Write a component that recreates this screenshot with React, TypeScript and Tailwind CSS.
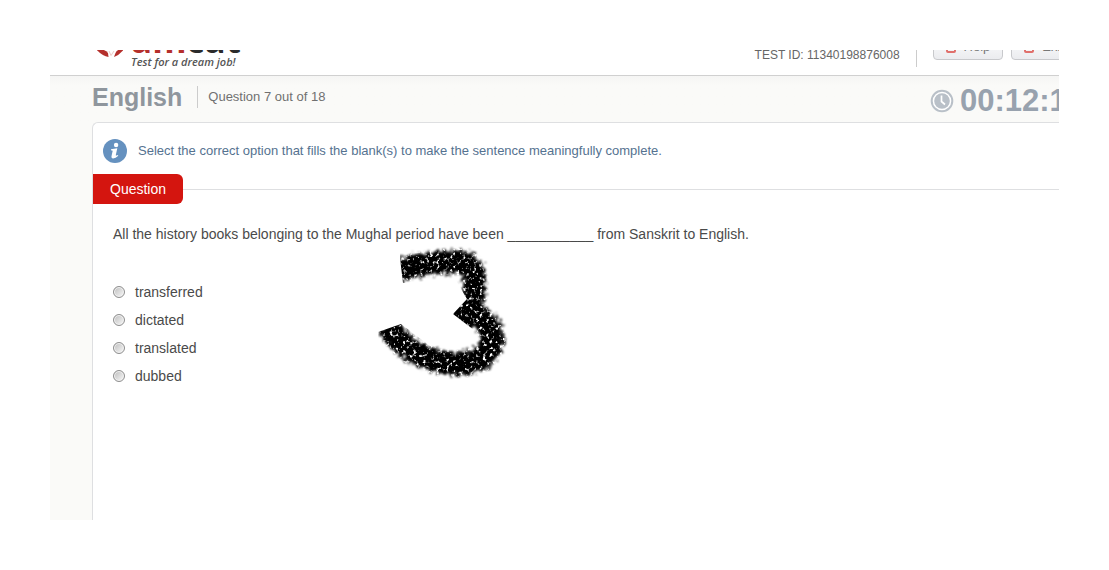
import React from "react";

const options = ["transferred", "dictated", "translated", "dubbed"];

function Logo() {
  return (
    <div className="flex items-end gap-2">
      <svg className="mb-3 h-6 w-[26px]" viewBox="0 0 26 24" aria-hidden="true">
        <path d="M-2 14Q8 15 11 19L11.5 23Q5 22 -2 14Z" fill="#b5302c" />
        <path d="M28 14Q20 15 18.5 19L17 23Q23 21 28 14Z" fill="#b5302c" />
        <path d="M12 17L14 21.5L17 17" fill="none" stroke="#eecac7" strokeWidth="1" />
      </svg>
      <div className="flex flex-col font-['Open_Sans',sans-serif]">
        <span className="h-7 text-[35px] leading-7 font-bold text-[#b5302c]">
          am<span className="text-[#2b2b2b]">cat</span>
        </span>
        <span className="text-[11px] leading-4 font-semibold text-[#555] italic">
          Test for a dream job!
        </span>
      </div>
    </div>
  );
}

function HeaderButton({ label }: { label: string }) {
  return (
    <button
      type="button"
      className="flex h-[27px] shrink-0 items-center gap-2 rounded border border-[#c8c9cc] bg-gradient-to-b from-white to-[#ebecef] px-3 text-[13px] leading-4 text-[#777]"
    >
      <span className="h-3 w-2.5 rounded-xs border-2 border-[#e0706c]" />
      {label}
    </button>
  );
}

function ClockIcon() {
  return (
    <svg className="size-6" viewBox="0 0 24 24" aria-hidden="true">
      <circle cx="12" cy="12" r="10.3" fill="#fff" stroke="#b9c0c8" strokeWidth="2" />
      <circle cx="12" cy="12" r="7.8" fill="#b9c0c8" />
      <path d="M11.5 6.5V12.5L15 15.5" fill="none" stroke="#fff" strokeWidth="1.7" />
    </svg>
  );
}

function InfoIcon() {
  return (
    <svg className="size-6 shrink-0" viewBox="0 0 24 24" aria-hidden="true">
      <circle cx="12" cy="12" r="12" fill="#6591bf" />
      <circle cx="13.1" cy="6" r="2.2" fill="#fff" />
      <path
        d="M8 10.2Q11 9.7 14.3 9.2L12.8 16Q12.7 17.2 14.8 15.9L15.3 16.8Q12.6 19.4 10.1 19.4Q8 19.2 8.6 16.7L9.7 11.7L8 11.3Z"
        fill="#fff"
      />
    </svg>
  );
}

const upperStroke = "M395 271Q426 260 459 261Q475 262 474 281Q477 300 458 324";
const lowerStroke = "M462 315Q483 311 490 328Q497 345 480 358Q460 367 433 359Q404 351 387 323";

function BrushThree() {
  return (
    <svg
      className="pointer-events-none absolute top-[118px] left-[277px] h-[150px] w-[150px]"
      viewBox="370 240 150 150"
      aria-hidden="true"
    >
      <defs>
        <filter id="brush" filterUnits="userSpaceOnUse" x="370" y="240" width="150" height="150" colorInterpolationFilters="sRGB">
          <feTurbulence type="fractalNoise" baseFrequency="0.3" numOctaves="2" seed="4" result="n" />
          <feDisplacementMap in="SourceGraphic" in2="n" scale="14" xChannelSelector="R" yChannelSelector="G" result="d" />
          <feGaussianBlur in="d" stdDeviation="1.2" />
        </filter>
        <filter id="grain" filterUnits="userSpaceOnUse" x="370" y="240" width="150" height="150" colorInterpolationFilters="sRGB">
          <feTurbulence type="fractalNoise" baseFrequency="0.3" numOctaves="2" seed="9" />
          <feColorMatrix values="0 0 0 0 1  0 0 0 0 1  0 0 0 0 1  5 0 0 0 -2.8" result="g" />
          <feComposite in="g" in2="SourceAlpha" operator="in" result="c" />
          <feGaussianBlur in="c" stdDeviation="0.6" />
        </filter>
        <clipPath id="ends">
          <path d="M400 257L403 282L455 278L467 298L453 313L474 329L465 342L430 345L401 323L378 331V390H520V240H400Z" />
        </clipPath>
      </defs>
      <g clipPath="url(#ends)" fill="none" strokeLinejoin="round">
        <g filter="url(#brush)" stroke="#000">
          <path d={upperStroke} strokeWidth="23" />
          <path d={lowerStroke} strokeWidth="23" />
        </g>
        <g filter="url(#grain)" stroke="#fff">
          <path d={upperStroke} strokeWidth="28" />
          <path d={lowerStroke} strokeWidth="28" />
        </g>
      </g>
    </svg>
  );
}

export default function App() {
  return (
    <div className="min-h-screen bg-white p-[50px] font-['Liberation_Sans',Arial,sans-serif] text-[#4a4a4a]">
      <div className="overflow-hidden bg-[#fafaf8]">
        <header className="flex h-[26px] items-end justify-between overflow-hidden border-b border-[#d0d0d0] bg-white pl-[47px]">
          <div className="pb-[5px]">
            <Logo />
          </div>
          <div className="-mr-[17px] flex items-end">
            <span className="pb-3 text-[12px] leading-4 text-[#666]">TEST ID: 11340198876008</span>
            <span className="mr-4 mb-2 ml-4 h-10 w-px bg-[#ccc]" />
            <div className="-mr-px flex gap-2 pb-[15px]">
              <HeaderButton label="Help" />
              <HeaderButton label="Exit" />
            </div>
          </div>
        </header>

        <div className="flex h-[46px] items-center justify-between bg-gradient-to-b from-[#f5f5f4] to-[#fafaf8] to-20% pl-[42px]">
          <div className="flex items-center pb-1">
            <h1 className="text-[25px] leading-8 font-bold text-[#8f969d]">English</h1>
            <span className="mr-2.5 ml-[15px] h-[22px] w-px bg-[#ccc]" />
            <span className="text-[13px] text-[#707070]">Question 7 out of 18</span>
          </div>
          <div className="-mr-[25px] flex items-center gap-1.5 pt-1 whitespace-nowrap">
            <ClockIcon />
            <span className="text-[31px] leading-8 font-bold text-[#98a2ae]">00:12:10</span>
          </div>
        </div>

        <main className="relative ml-[42px] min-h-[398px] rounded-tl-md border-t border-l border-[#dedfe1] bg-white">
          <div className="flex h-[51px] items-center gap-[11px] pt-1 pl-2.5">
            <InfoIcon />
            <p className="text-[13px] text-[#557290]">
              Select the correct option that fills the blank(s) to make the sentence meaningfully complete.
            </p>
          </div>
          <div className="flex items-center">
            <h2 className="rounded-r-md bg-[#d4150f] px-[17px] py-[5px] text-[14px] leading-5 text-white">Question</h2>
            <span className="h-px flex-1 bg-[#dedfe1]" />
          </div>
          <form className="px-5 pt-5">
            <fieldset>
              <legend className="text-[14px] leading-5">
                All the history books belonging to the Mughal period have been ___________ from Sanskrit to English.
              </legend>
              <div className="flex flex-col items-start gap-2 pt-[38px]">
                {options.map((option) => (
                  <label key={option} className="flex items-center gap-[10px] text-[14px] leading-5">
                    <input
                      type="radio"
                      name="answer"
                      value={option}
                      className="size-3 appearance-none rounded-full border border-[#8e8e8e] bg-gradient-to-br from-[#bdbdbd] to-[#fafafa] shadow-[inset_0_0_0_1px_#f4f4f4] checked:to-[#333]"
                    />
                    {option}
                  </label>
                ))}
              </div>
            </fieldset>
          </form>
          <BrushThree />
        </main>
      </div>
    </div>
  );
}
